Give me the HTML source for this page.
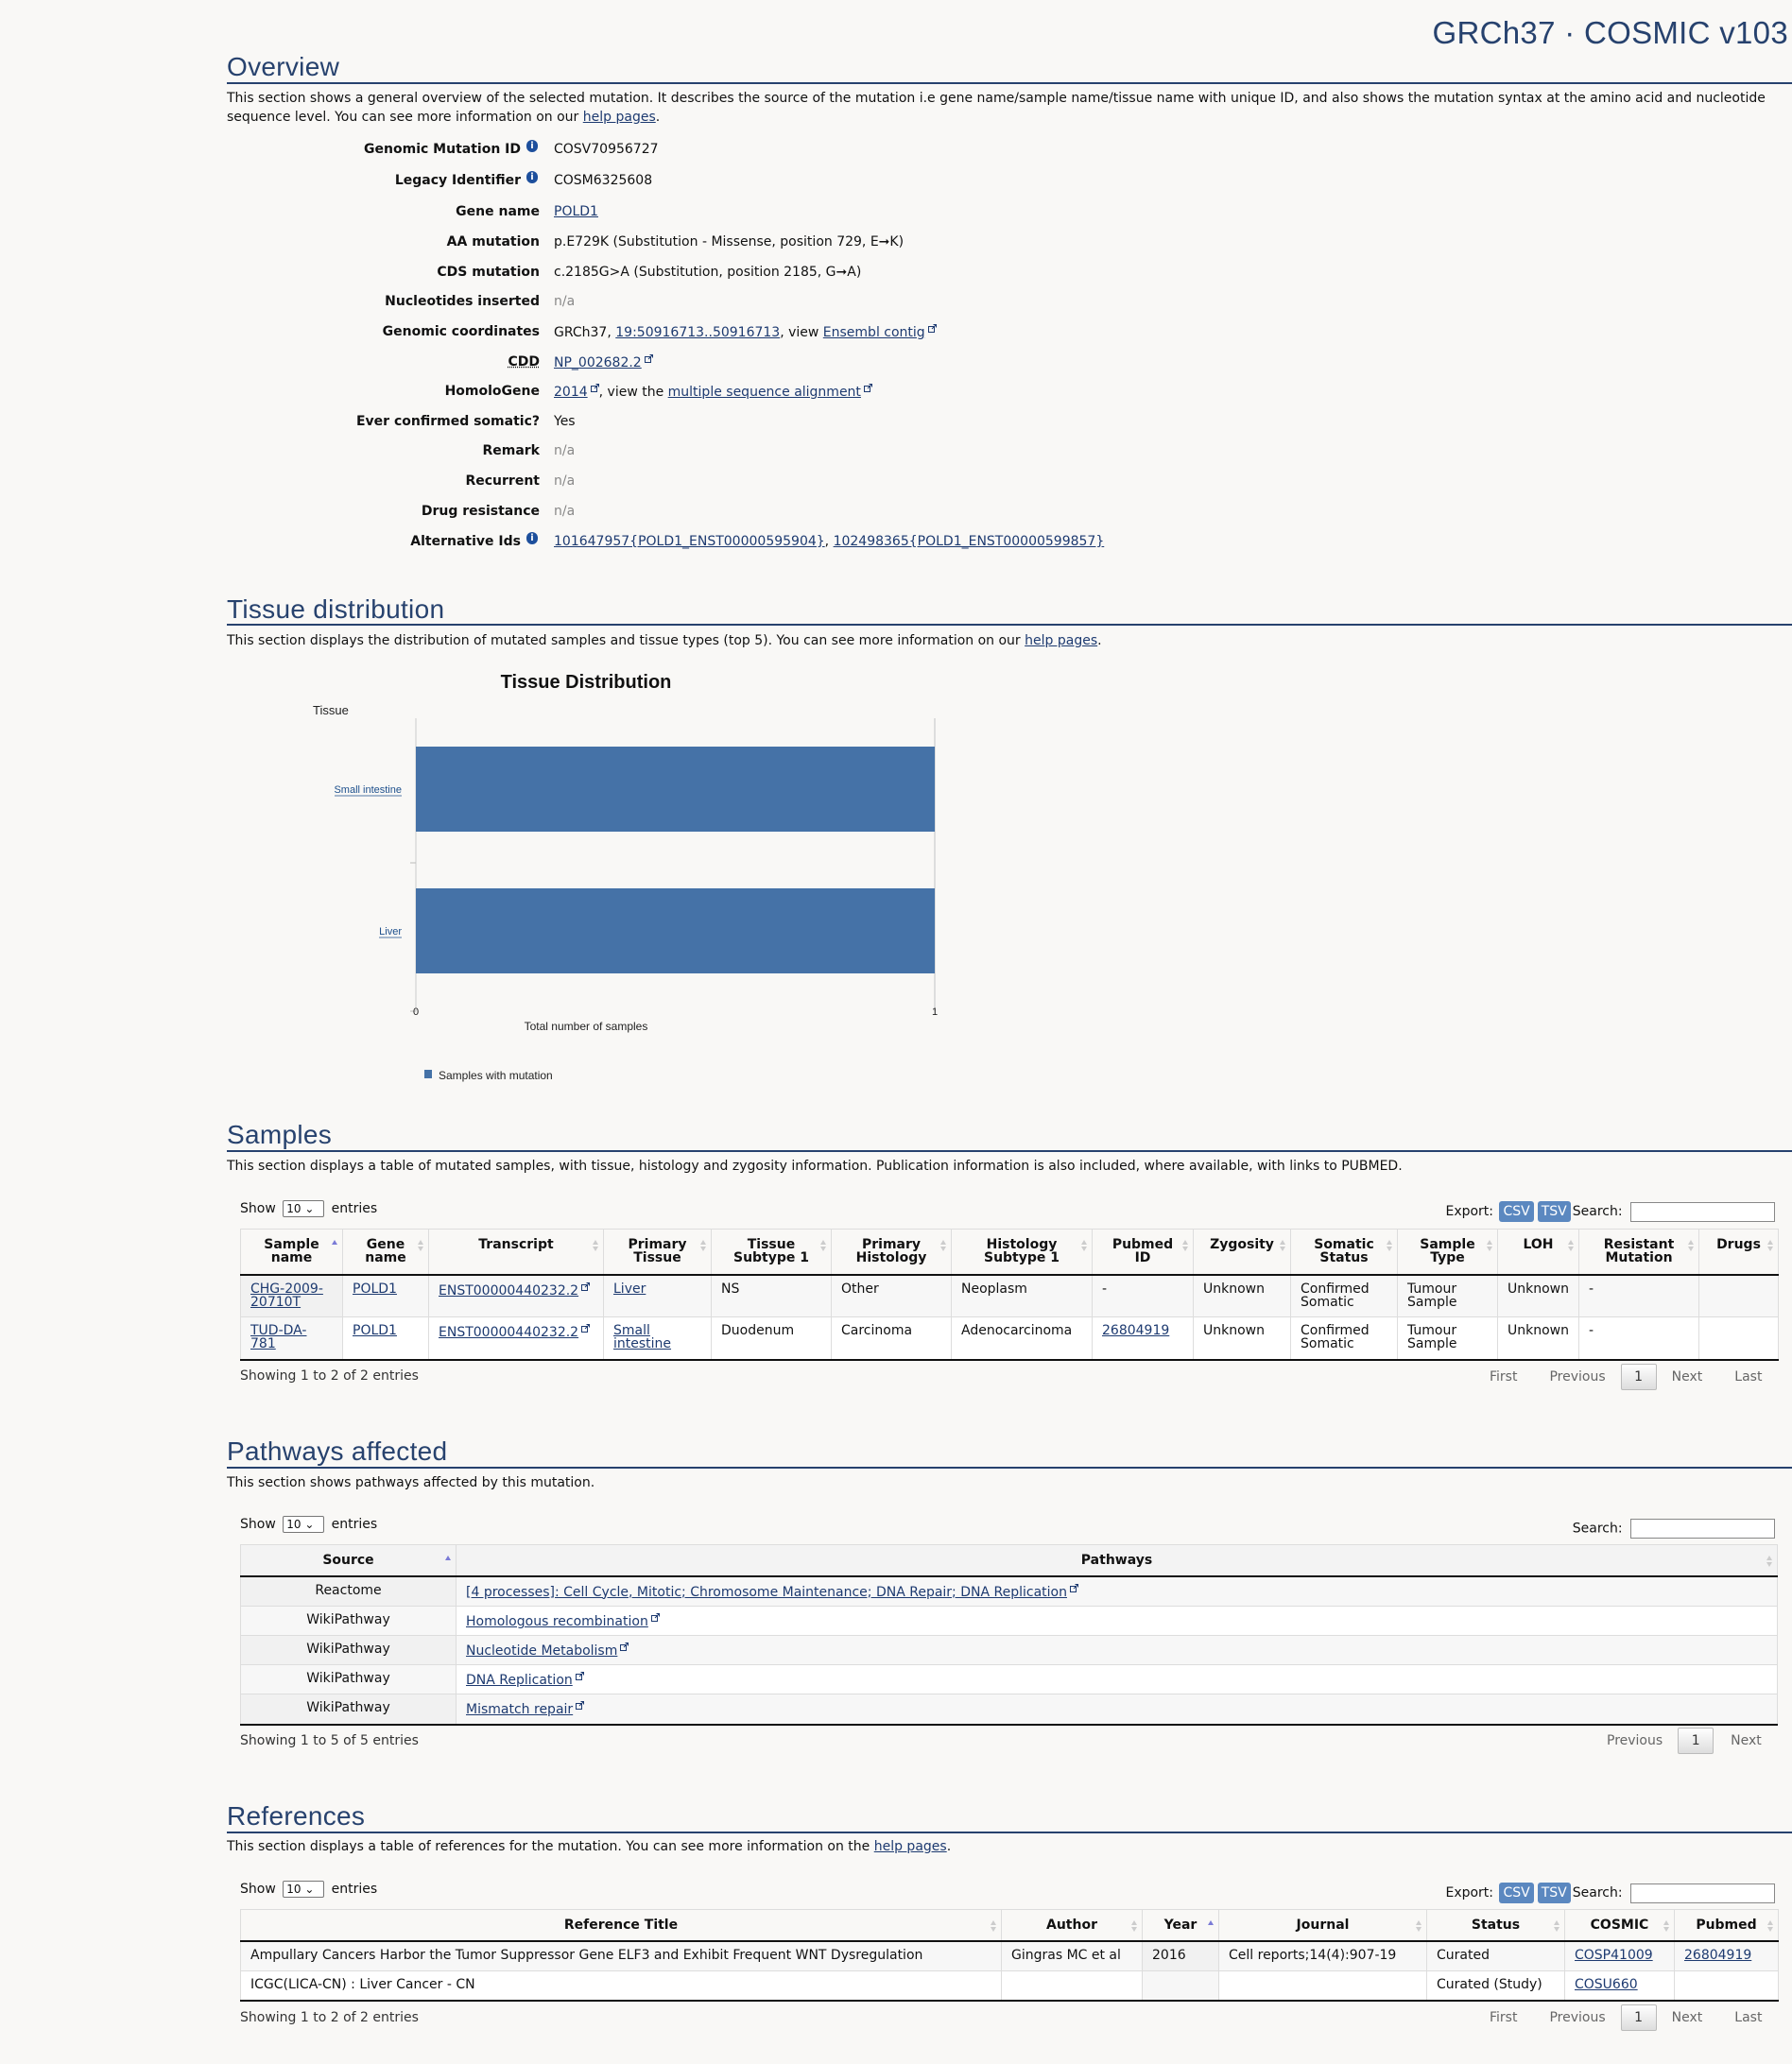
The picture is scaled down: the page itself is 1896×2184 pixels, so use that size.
<!DOCTYPE html>
<html><head><meta charset="utf-8">
<style>
*{box-sizing:border-box;margin:0;padding:0}
body{width:1896px;height:2184px;background:#f9f8f6;font-family:"DejaVu Sans","Liberation Sans",sans-serif;font-size:14px;color:#111;position:relative;overflow:hidden}
a{color:#1d3a70;text-decoration:underline}
.abs{position:absolute}
.title{position:absolute;right:4px;top:16px;font-family:"Liberation Sans",sans-serif;font-size:33px;color:#27426e;letter-spacing:0.3px;white-space:nowrap}
h2{position:absolute;left:240px;font-family:"Liberation Sans",sans-serif;font-weight:normal;font-size:28px;color:#27426e;letter-spacing:0.3px}
.rule{position:absolute;left:240px;right:0;height:2px;background:#27426e}
.desc{position:absolute;left:240px;line-height:20px;white-space:nowrap}
.lab{position:absolute;right:1325px;font-weight:bold;text-align:right;white-space:nowrap}
.lab.i{right:1345px}
.info{position:absolute;left:557px;width:12px;height:13px;border-radius:6px;background:#1d4f9c;color:#fff;font-size:10px;font-weight:bold;text-align:center;line-height:13px}
.val{position:absolute;left:586px;white-space:nowrap}
.na{color:#888}
.ext{display:inline-block;width:9px;height:9px;margin-left:3px;vertical-align:4px}
table{position:absolute;border-collapse:collapse;table-layout:fixed;left:254px;width:1627px}
th{font-weight:bold;text-align:center;border:1px solid #ddd;border-bottom:2px solid #111;position:relative;vertical-align:top;padding:9px 14px 0;line-height:14px}
th:after{content:"";position:absolute;right:5px;top:11px;width:0;height:0;border-left:3px solid transparent;border-right:3px solid transparent;border-bottom:5px solid #ccc}
th:before{content:"";position:absolute;right:5px;top:18px;width:0;height:0;border-left:3px solid transparent;border-right:3px solid transparent;border-top:5px solid #ccc}
th.up:after{border-bottom-color:#7b7bd6}
th.up:before{display:none}
td{border:1px solid #ddd;vertical-align:top;padding:7px 10px 6px;line-height:14px}
tbody tr:last-child td{border-bottom:2px solid #111}
.sel{background:#f1f1f1}
.w{background:#fff}
.g{background:#f7f7f7}
.show{position:absolute;left:254px}
.show span.sel2{display:inline-block;border:1px solid #777;border-radius:2px;width:44px;height:18px;vertical-align:middle;font-size:12px;padding-left:3px;line-height:16px;background:#fff;margin:0 3px}
.btn{display:inline-block;background:#5b88c0;color:#fff;border-radius:3px;padding:3px 4px;font-size:14px;margin:0 2px}
.srch{display:inline-block;width:153px;height:21px;border:1px solid #888;background:#fff;vertical-align:middle;margin-left:4px}
.pg{position:absolute;color:#666;white-space:nowrap}
.pbox{display:inline-block;width:38px;height:28px;border:1px solid #bbb;border-radius:2px;background:linear-gradient(#fff,#ddd);text-align:center;line-height:26px;color:#333}
</style></head><body>

<div class="title">GRCh37 · COSMIC v103</div>

<h2 style="top:55px">Overview</h2>
<div class="rule" style="top:87px"></div>
<div class="desc" style="top:94px">This section shows a general overview of the selected mutation. It describes the source of the mutation i.e gene name/sample name/tissue name with unique ID, and also shows the mutation syntax at the amino acid and nucleotide<br>sequence level. You can see more information on our <a>help pages</a>.</div>

<div class="lab i" style="top:150px">Genomic Mutation ID</div><div class="info" style="top:148px">i</div><div class="val" style="top:150px">COSV70956727</div>
<div class="lab i" style="top:183px">Legacy Identifier</div><div class="info" style="top:181px">i</div><div class="val" style="top:183px">COSM6325608</div>
<div class="lab" style="top:216px">Gene name</div><div class="val" style="top:216px"><a>POLD1</a></div>
<div class="lab" style="top:248px">AA mutation</div><div class="val" style="top:248px">p.E729K (Substitution - Missense, position 729, E➞K)</div>
<div class="lab" style="top:280px">CDS mutation</div><div class="val" style="top:280px">c.2185G&gt;A (Substitution, position 2185, G➞A)</div>
<div class="lab" style="top:311px">Nucleotides inserted</div><div class="val na" style="top:311px">n/a</div>
<div class="lab" style="top:343px">Genomic coordinates</div><div class="val" style="top:343px">GRCh37, <a>19:50916713..50916713</a>, view <a>Ensembl contig</a><svg class="ext" viewBox="0 0 9 9"><rect x="0.5" y="2.5" width="6" height="6" fill="none" stroke="#1d3a70"/><path d="M4 5L8.5 0.5M5.5 0.5H8.5V3.5" stroke="#1d3a70" fill="none"/></svg></div>
<div class="lab" style="top:375px;text-decoration:underline dotted">CDD</div><div class="val" style="top:375px"><a>NP_002682.2</a><svg class="ext" viewBox="0 0 9 9"><rect x="0.5" y="2.5" width="6" height="6" fill="none" stroke="#1d3a70"/><path d="M4 5L8.5 0.5M5.5 0.5H8.5V3.5" stroke="#1d3a70" fill="none"/></svg></div>
<div class="lab" style="top:406px">HomoloGene</div><div class="val" style="top:406px"><a>2014</a><svg class="ext" viewBox="0 0 9 9"><rect x="0.5" y="2.5" width="6" height="6" fill="none" stroke="#1d3a70"/><path d="M4 5L8.5 0.5M5.5 0.5H8.5V3.5" stroke="#1d3a70" fill="none"/></svg>, view the <a>multiple sequence alignment</a><svg class="ext" viewBox="0 0 9 9"><rect x="0.5" y="2.5" width="6" height="6" fill="none" stroke="#1d3a70"/><path d="M4 5L8.5 0.5M5.5 0.5H8.5V3.5" stroke="#1d3a70" fill="none"/></svg></div>
<div class="lab" style="top:438px">Ever confirmed somatic?</div><div class="val" style="top:438px">Yes</div>
<div class="lab" style="top:469px">Remark</div><div class="val na" style="top:469px">n/a</div>
<div class="lab" style="top:501px">Recurrent</div><div class="val na" style="top:501px">n/a</div>
<div class="lab" style="top:533px">Drug resistance</div><div class="val na" style="top:533px">n/a</div>
<div class="lab i" style="top:565px">Alternative Ids</div><div class="info" style="top:563px">i</div><div class="val" style="top:565px"><a>101647957{POLD1_ENST00000595904}</a>, <a>102498365{POLD1_ENST00000599857}</a></div>

<h2 style="top:629px">Tissue distribution</h2>
<div class="rule" style="top:660px"></div>
<div class="desc" style="top:668px">This section displays the distribution of mutated samples and tissue types (top 5). You can see more information on our <a>help pages</a>.</div>

<svg class="abs" style="left:300px;top:690px" width="720" height="470" viewBox="0 0 720 470" font-family="Liberation Sans, Arial, sans-serif">
<text x="320" y="38" font-size="20" font-weight="bold" text-anchor="middle" fill="#111">Tissue Distribution</text>
<text x="31" y="66" font-size="13" fill="#222">Tissue</text>
<line x1="140" y1="70" x2="140" y2="380" stroke="#ccc"/>
<line x1="689" y1="70" x2="689" y2="380" stroke="#ddd" stroke-width="2"/>
<line x1="134" y1="380" x2="140" y2="380" stroke="#bbb"/>
<line x1="134" y1="223" x2="140" y2="223" stroke="#bbb"/>
<rect x="140" y="100" width="549" height="90" fill="#4572a7"/>
<rect x="140" y="250" width="549" height="90" fill="#4572a7"/>
<text x="125" y="149" font-size="11" text-anchor="end" fill="#1d4f8c">Small intestine</text>
<line x1="54" y1="152" x2="125" y2="152" stroke="#1d4f8c" stroke-width="0.8"/>
<text x="125" y="299" font-size="11" text-anchor="end" fill="#1d4f8c">Liver</text>
<line x1="101" y1="302" x2="125" y2="302" stroke="#1d4f8c" stroke-width="0.8"/>
<text x="140" y="384" font-size="11" text-anchor="middle" fill="#222">0</text>
<text x="689" y="384" font-size="11" text-anchor="middle" fill="#222">1</text>
<text x="320" y="400" font-size="12" text-anchor="middle" fill="#222">Total number of samples</text>
<rect x="149" y="442" width="8" height="9" fill="#4572a7"/>
<text x="164" y="452" font-size="12" fill="#222">Samples with mutation</text>
</svg>

<h2 style="top:1185px">Samples</h2>
<div class="rule" style="top:1217px"></div>
<div class="desc" style="top:1224px">This section displays a table of mutated samples, with tissue, histology and zygosity information. Publication information is also included, where available, with links to PUBMED.</div>
<div class="show" style="top:1270px">Show <span class="sel2">10 &#8964;</span> entries</div>
<div class="abs" style="right:18px;top:1271px">Export: <span class="btn">CSV</span><span class="btn">TSV</span>Search: <span class="srch"></span></div>
<table style="top:1300px">
<colgroup><col style="width:108px"><col style="width:91px"><col style="width:185px"><col style="width:114px"><col style="width:127px"><col style="width:127px"><col style="width:149px"><col style="width:107px"><col style="width:103px"><col style="width:113px"><col style="width:106px"><col style="width:86px"><col style="width:127px"><col style="width:84px"></colgroup>
<thead><tr style="height:48px"><th class="up">Sample name</th><th>Gene name</th><th>Transcript</th><th>Primary Tissue</th><th>Tissue Subtype 1</th><th>Primary Histology</th><th>Histology Subtype 1</th><th>Pubmed ID</th><th>Zygosity</th><th>Somatic Status</th><th>Sample Type</th><th>LOH</th><th>Resistant Mutation</th><th>Drugs</th></tr></thead>
<tbody>
<tr class="g" style="height:45px"><td class="sel"><a>CHG-2009-20710T</a></td><td><a>POLD1</a></td><td style="white-space:nowrap"><a>ENST00000440232.2</a><svg class="ext" viewBox="0 0 9 9"><rect x="0.5" y="2.5" width="6" height="6" fill="none" stroke="#1d3a70"/><path d="M4 5L8.5 0.5M5.5 0.5H8.5V3.5" stroke="#1d3a70" fill="none"/></svg></td><td><a>Liver</a></td><td>NS</td><td>Other</td><td>Neoplasm</td><td>-</td><td>Unknown</td><td>Confirmed Somatic</td><td>Tumour Sample</td><td>Unknown</td><td>-</td><td></td></tr>
<tr class="w" style="height:45px"><td class="g"><a>TUD-DA-<br>781</a></td><td><a>POLD1</a></td><td style="white-space:nowrap"><a>ENST00000440232.2</a><svg class="ext" viewBox="0 0 9 9"><rect x="0.5" y="2.5" width="6" height="6" fill="none" stroke="#1d3a70"/><path d="M4 5L8.5 0.5M5.5 0.5H8.5V3.5" stroke="#1d3a70" fill="none"/></svg></td><td><a>Small intestine</a></td><td>Duodenum</td><td>Carcinoma</td><td>Adenocarcinoma</td><td><a>26804919</a></td><td>Unknown</td><td>Confirmed Somatic</td><td>Tumour Sample</td><td>Unknown</td><td>-</td><td></td></tr>
</tbody></table>
<div class="abs" style="left:254px;top:1448px;color:#333">Showing 1 to 2 of 2 entries</div>
<div class="pg" style="left:1576px;top:1443px"><span style="margin-right:34px">First</span><span style="margin-right:16px">Previous</span><span class="pbox">1</span><span style="margin-left:16px;margin-right:34px">Next</span><span>Last</span></div>

<h2 style="top:1520px">Pathways affected</h2>
<div class="rule" style="top:1552px"></div>
<div class="desc" style="top:1559px">This section shows pathways affected by this mutation.</div>
<div class="show" style="top:1604px">Show <span class="sel2">10 &#8964;</span> entries</div>
<div class="abs" style="right:18px;top:1607px">Search: <span class="srch"></span></div>
<table style="top:1634px">
<colgroup><col style="width:228px"><col></colgroup>
<thead><tr style="height:33px;background:#f3f3f3"><th class="up">Source</th><th>Pathways</th></tr></thead>
<tbody>
<tr class="g" style="height:32px"><td class="sel" style="text-align:center">Reactome</td><td><a>[4 processes]: Cell Cycle, Mitotic; Chromosome Maintenance; DNA Repair; DNA Replication</a><svg class="ext" viewBox="0 0 9 9"><rect x="0.5" y="2.5" width="6" height="6" fill="none" stroke="#1d3a70"/><path d="M4 5L8.5 0.5M5.5 0.5H8.5V3.5" stroke="#1d3a70" fill="none"/></svg></td></tr>
<tr class="w" style="height:31px"><td class="g" style="text-align:center">WikiPathway</td><td><a>Homologous recombination</a><svg class="ext" viewBox="0 0 9 9"><rect x="0.5" y="2.5" width="6" height="6" fill="none" stroke="#1d3a70"/><path d="M4 5L8.5 0.5M5.5 0.5H8.5V3.5" stroke="#1d3a70" fill="none"/></svg></td></tr>
<tr class="g" style="height:31px"><td class="sel" style="text-align:center">WikiPathway</td><td><a>Nucleotide Metabolism</a><svg class="ext" viewBox="0 0 9 9"><rect x="0.5" y="2.5" width="6" height="6" fill="none" stroke="#1d3a70"/><path d="M4 5L8.5 0.5M5.5 0.5H8.5V3.5" stroke="#1d3a70" fill="none"/></svg></td></tr>
<tr class="w" style="height:31px"><td class="g" style="text-align:center">WikiPathway</td><td><a>DNA Replication</a><svg class="ext" viewBox="0 0 9 9"><rect x="0.5" y="2.5" width="6" height="6" fill="none" stroke="#1d3a70"/><path d="M4 5L8.5 0.5M5.5 0.5H8.5V3.5" stroke="#1d3a70" fill="none"/></svg></td></tr>
<tr class="g" style="height:32px"><td class="sel" style="text-align:center">WikiPathway</td><td><a>Mismatch repair</a><svg class="ext" viewBox="0 0 9 9"><rect x="0.5" y="2.5" width="6" height="6" fill="none" stroke="#1d3a70"/><path d="M4 5L8.5 0.5M5.5 0.5H8.5V3.5" stroke="#1d3a70" fill="none"/></svg></td></tr>
</tbody></table>
<div class="abs" style="left:254px;top:1834px;color:#333">Showing 1 to 5 of 5 entries</div>
<div class="pg" style="left:1700px;top:1828px"><span style="margin-right:16px">Previous</span><span class="pbox">1</span><span style="margin-left:18px">Next</span></div>

<h2 style="top:1906px">References</h2>
<div class="rule" style="top:1938px"></div>
<div class="desc" style="top:1944px">This section displays a table of references for the mutation. You can see more information on the <a>help pages</a>.</div>
<div class="show" style="top:1990px">Show <span class="sel2">10 &#8964;</span> entries</div>
<div class="abs" style="right:18px;top:1992px">Export: <span class="btn">CSV</span><span class="btn">TSV</span>Search: <span class="srch"></span></div>
<table style="top:2020px">
<colgroup><col style="width:805px"><col style="width:149px"><col style="width:81px"><col style="width:220px"><col style="width:146px"><col style="width:116px"><col style="width:110px"></colgroup>
<thead><tr style="height:33px"><th>Reference Title</th><th>Author</th><th class="up">Year</th><th>Journal</th><th>Status</th><th>COSMIC</th><th>Pubmed</th></tr></thead>
<tbody>
<tr class="g" style="height:32px"><td>Ampullary Cancers Harbor the Tumor Suppressor Gene ELF3 and Exhibit Frequent WNT Dysregulation</td><td>Gingras MC et al</td><td class="sel">2016</td><td>Cell reports;14(4):907-19</td><td>Curated</td><td><a>COSP41009</a></td><td><a>26804919</a></td></tr>
<tr class="w" style="height:31px"><td>ICGC(LICA-CN) : Liver Cancer - CN</td><td></td><td class="g"></td><td></td><td>Curated (Study)</td><td><a>COSU660</a></td><td></td></tr>
</tbody></table>
<div class="abs" style="left:254px;top:2127px;color:#333">Showing 1 to 2 of 2 entries</div>
<div class="pg" style="left:1576px;top:2121px"><span style="margin-right:34px">First</span><span style="margin-right:16px">Previous</span><span class="pbox">1</span><span style="margin-left:16px;margin-right:34px">Next</span><span>Last</span></div>

</body></html>
